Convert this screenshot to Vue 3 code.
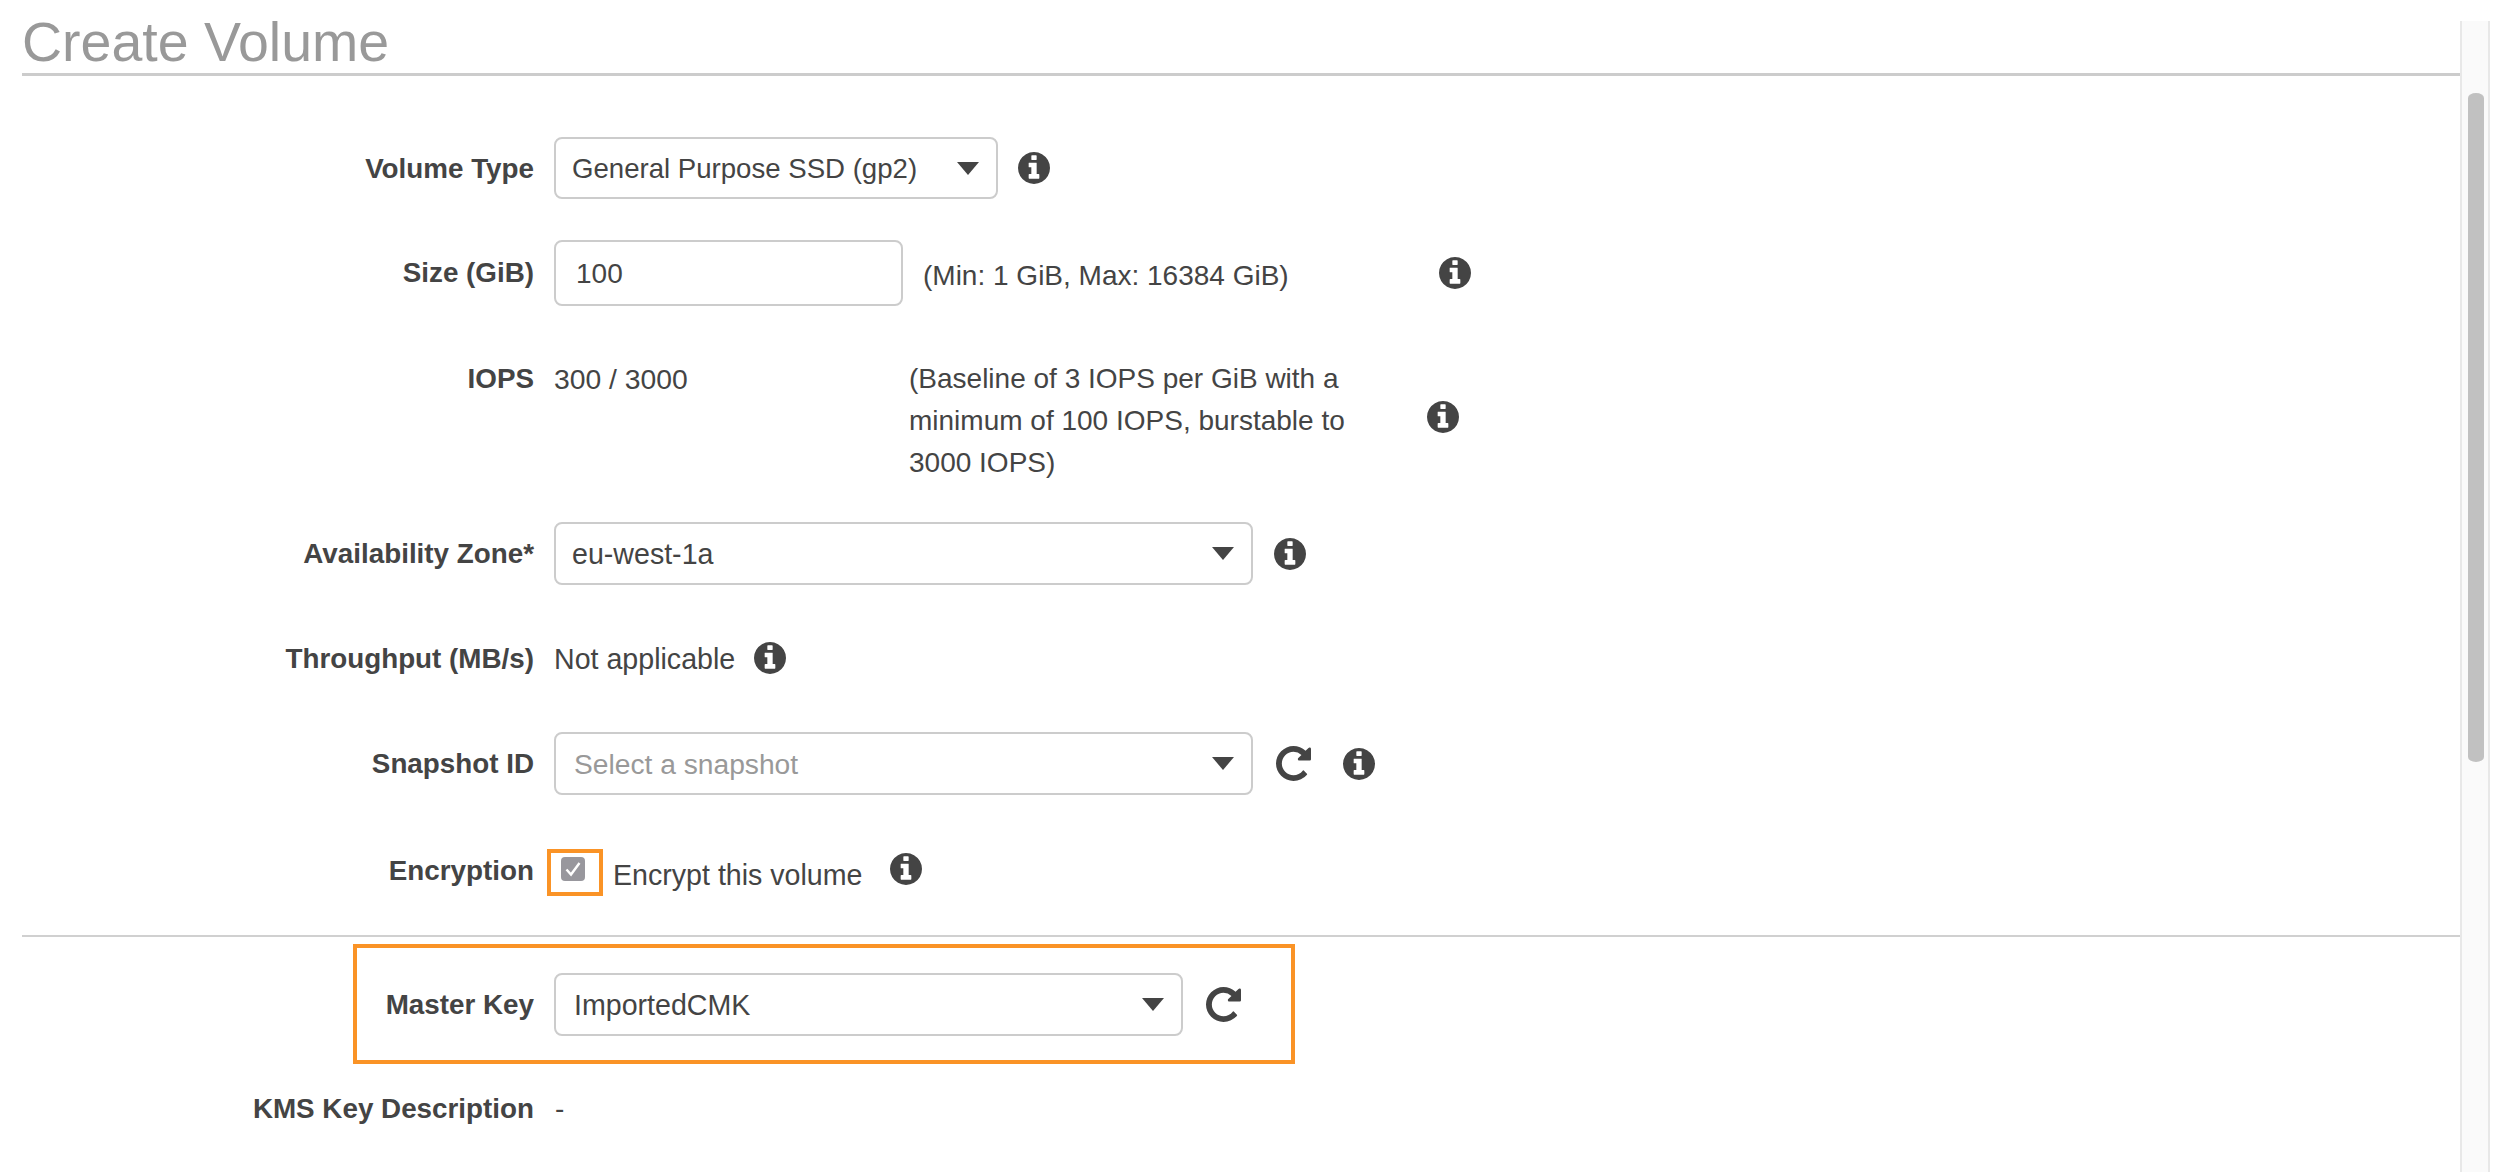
<script setup>
const infoPath = 'M1152 1376v-160q0-14-9-23t-23-9h-96v-512q0-14-9-23t-23-9h-320q-14 0-23 9t-9 23v160q0 14 9 23t23 9h96v320h-96q-14 0-23 9t-9 23v160q0 14 9 23t23 9h448q14 0 23-9t9-23zm-128-896v-160q0-14-9-23t-23-9h-192q-14 0-23 9t-9 23v160q0 14 9 23t23 9h192q14 0 23-9t9-23zm640 416q0 209-103 385.5t-279.5 279.5-385.5 103-385.5-103-279.5-279.5-103-385.5 103-385.5 279.5-279.5 385.5-103 385.5 103 279.5 279.5 103 385.5z'
const refreshPath = 'M1664 256v448q0 26-19 45t-45 19h-448q-42 0-59-40-17-39 14-69l138-138q-148-137-349-137-104 0-198.5 40.5t-163.5 109.5-109.5 163.5-40.5 198.5 40.5 198.5 109.5 163.5 163.5 109.5 198.5 40.5q119 0 225-52t179-147q7-10 23-12 15 0 25 9l137 138q9 8 9.5 20.5t-7.5 22.5q-109 132-264 204.5t-327 72.5q-156 0-298-61t-245-164-164-245-61-298 61-298 164-245 245-164 298-61q147 0 284.5 55.5t244.5 156.5l130-129q29-31 70-14 39 17 39 59z'
</script>

<template>
  <div class="page">
    <main class="content">
      <h1 class="title">Create Volume</h1>

      <div class="row row-type">
        <div class="label">Volume Type</div>
        <div class="select w-type">
          <span class="type-text">General Purpose SSD (gp2)</span>
          <svg class="arrow" viewBox="0 0 22 13"><path d="M0 0H22L11 13Z" /></svg>
        </div>
        <svg class="info info-type" viewBox="128 128 1536 1536"><path :d="infoPath" /></svg>
      </div>

      <div class="row row-size">
        <div class="label">Size (GiB)</div>
        <input class="input" value="100" />
        <div class="hint hint-size">(Min: 1 GiB, Max: 16384 GiB)</div>
        <svg class="info info-size" viewBox="128 128 1536 1536"><path :d="infoPath" /></svg>
      </div>

      <div class="row row-iops">
        <div class="label">IOPS</div>
        <div class="value iops-value">300 / 3000</div>
        <div class="hint hint-iops">(Baseline of 3 IOPS per GiB with a<br />minimum of 100 IOPS, burstable to<br />3000 IOPS)</div>
        <svg class="info info-iops" viewBox="128 128 1536 1536"><path :d="infoPath" /></svg>
      </div>

      <div class="row row-zone">
        <div class="label">Availability Zone*</div>
        <div class="select w-wide">
          <span>eu-west-1a</span>
          <svg class="arrow" viewBox="0 0 22 13"><path d="M0 0H22L11 13Z" /></svg>
        </div>
        <svg class="info info-zone" viewBox="128 128 1536 1536"><path :d="infoPath" /></svg>
      </div>

      <div class="row row-through">
        <div class="label">Throughput (MB/s)</div>
        <div class="value wide-text">Not applicable</div>
        <svg class="info info-through" viewBox="128 128 1536 1536"><path :d="infoPath" /></svg>
      </div>

      <div class="row row-snap">
        <div class="label">Snapshot ID</div>
        <div class="select w-wide placeholder">
          <span>Select a snapshot</span>
          <svg class="arrow" viewBox="0 0 22 13"><path d="M0 0H22L11 13Z" /></svg>
        </div>
        <svg class="refresh refresh-snap" viewBox="128 128 1536 1536"><path :d="refreshPath" /></svg>
        <svg class="info info-snap" viewBox="128 128 1536 1536"><path :d="infoPath" /></svg>
      </div>

      <div class="row row-enc">
        <div class="label enc-label">Encryption</div>
        <div class="check-frame">
          <div class="check">
            <svg viewBox="0 0 24 24"><path d="M5.5 12.5 10 17.5 18.5 6" /></svg>
          </div>
        </div>
        <div class="value enc-text wide-text">Encrypt this volume</div>
        <svg class="info info-enc" viewBox="128 128 1536 1536"><path :d="infoPath" /></svg>
      </div>

      <hr class="divider" />

      <div class="master-frame">
        <div class="label master-label">Master Key</div>
        <div class="select w-master">
          <span>ImportedCMK</span>
          <svg class="arrow" viewBox="0 0 22 13"><path d="M0 0H22L11 13Z" /></svg>
        </div>
        <svg class="refresh refresh-master" viewBox="128 128 1536 1536"><path :d="refreshPath" /></svg>
      </div>

      <div class="row row-kms">
        <div class="label">KMS Key Description</div>
        <div class="value">-</div>
      </div>
    </main>

    <aside class="scrollbar"><div class="thumb"></div></aside>
  </div>
</template>

<style>
html, body { margin: 0; background: #fff; }
</style>

<style scoped>
.page {
  display: flex;
  width: 2512px;
  height: 1172px;
  overflow: hidden;
  background: #fff;
  color: #444;
  font-family: "Liberation Sans", Arial, sans-serif;
  font-size: 28px;
}
.content { width: 2438px; margin-left: 22px; }
.title {
  margin: 0;
  height: 73px;
  border-bottom: 3px solid #ccc;
  font-size: 55.5px;
  line-height: 84px;
  font-weight: 400;
  color: #999;
}
.row { display: flex; align-items: center; }
.label {
  width: 512px;
  flex: none;
  text-align: right;
  font-weight: 700;
  font-size: 27.8px;
  line-height: 42px;
  padding-top: 1px;
}
.select {
  box-sizing: border-box;
  display: flex;
  align-items: center;
  justify-content: space-between;
  flex: none;
  margin-left: 20px;
  padding: 2px 17px 0 16px;
  border: 2px solid #ccc;
  border-radius: 8px;
  background: #fff;
  font-size: 28.6px;
}
.select .type-text { font-size: 27.6px; }
.placeholder { color: #999; padding-left: 18px; font-size: 28.2px; }
.w-type { width: 444px; height: 62px; }
.w-wide { width: 699px; height: 63px; }
.w-master { width: 629px; height: 63px; padding-left: 18px; }
.arrow { width: 22px; height: 13px; fill: #444; margin-top: -2px; }
.input {
  box-sizing: border-box;
  flex: none;
  width: 349px;
  height: 66px;
  margin: 0 0 0 20px;
  padding: 2px 20px 0;
  border: 2px solid #ccc;
  border-radius: 8px;
  outline: none;
  font: inherit;
  color: #444;
}
.value { margin-left: 20px; line-height: 42px; padding-top: 1px; }
.wide-text { font-size: 28.6px; }
.hint { line-height: 42px; flex: none; }
.info { width: 32px; height: 32px; fill: #444; flex: none; }
.refresh { width: 35px; height: 35px; fill: #444; flex: none; }

.row-type { margin-top: 61px; height: 62px; }
.info-type { margin-left: 20px; }

.row-size { margin-top: 41px; height: 65px; }
.hint-size { margin-left: 20px; padding-top: 6px; }
.info-size { margin-left: 150px; }

.row-iops { margin-top: 52px; height: 126px; align-items: flex-start; }
.iops-value { width: 355px; flex: none; font-size: 28.3px; }
.hint-iops { width: 518px; padding-top: 1px; }
.info-iops { align-self: center; margin-top: -6px; margin-left: 0; }

.row-zone { margin-top: 39px; height: 63px; }
.info-zone { margin-left: 21px; }

.row-through { margin-top: 52px; height: 42px; }
.info-through { margin-left: 19px; }

.row-snap { margin-top: 52px; height: 65px; }
.refresh-snap { margin-left: 23px; }
.info-snap { margin-left: 32px; }

.row-enc { margin-top: 53px; height: 47px; }
.enc-label { align-self: flex-start; }
.check-frame {
  box-sizing: border-box;
  flex: none;
  width: 56px;
  height: 47px;
  margin-left: 13px;
  padding: 4px 0 0 10px;
  border: 4px solid #fa9326;
}
.check {
  width: 24px;
  height: 24px;
  border-radius: 4px;
  background: #98979d;
}
.check svg { display: block; fill: none; stroke: #fff; stroke-width: 2.4; }
.enc-text { margin-left: 10px; padding-top: 4px; }
.info-enc { margin-left: 27px; margin-top: -7px; }

.divider {
  margin: 39px 0 0;
  height: 0;
  border: 0;
  border-top: 2px solid #d0d0d0;
}
.master-frame {
  box-sizing: border-box;
  display: flex;
  align-items: center;
  width: 942px;
  height: 120px;
  margin: 7px 0 0 331px;
  border: 4px solid #fa9326;
}
.master-label { width: 177px; }
.refresh-master { margin-left: 23px; }

.row-kms { margin-top: 23px; height: 42px; }
.row-kms .value { margin-left: 21px; }

.scrollbar {
  box-sizing: border-box;
  flex: none;
  width: 30px;
  margin-top: 21px;
  padding-top: 72px;
  background: #fafafa;
  border-left: 2px solid #e8e8e8;
  border-right: 2px solid #e8e8e8;
}
.thumb {
  width: 16px;
  height: 669px;
  margin-left: 6px;
  border-radius: 8px / 5px;
  background: #c1c1c1;
}
</style>
